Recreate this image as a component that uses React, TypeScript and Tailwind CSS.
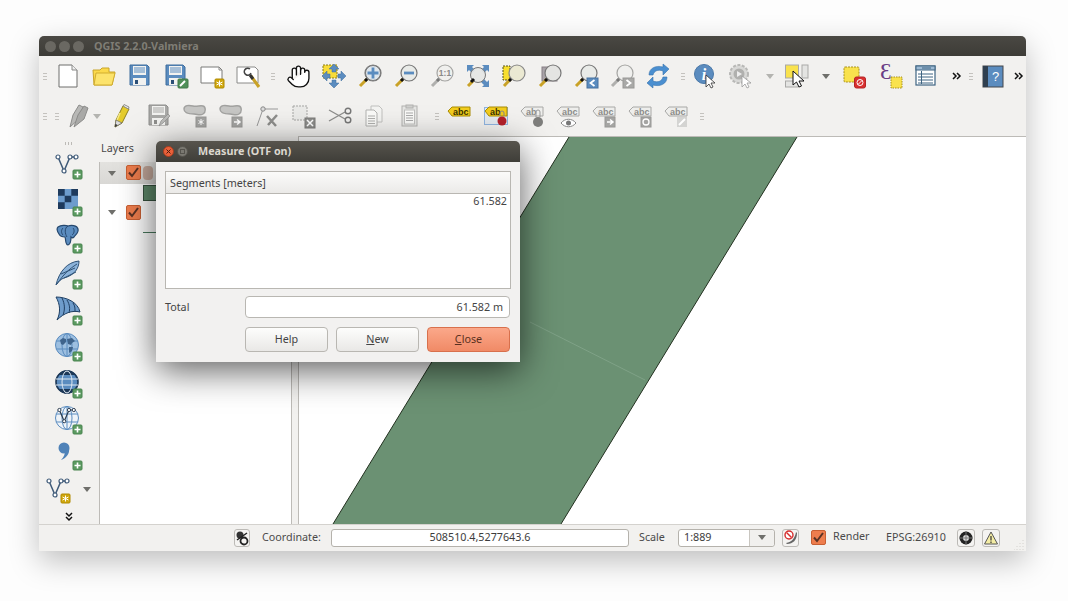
import React from 'react';
import { Hand } from 'lucide-react';

const Grip = ({ className = '' }: { className?: string }) => (
  <div className={`flex flex-col items-center gap-[2px] shrink-0 ${className}`}>
    <div className="w-[4px] h-[1px] bg-[#c4c2be]" />
    <div className="w-[4px] h-[1px] bg-[#c4c2be]" />
    <div className="w-[4px] h-[1px] bg-[#c4c2be]" />
  </div>
);

const Slot = ({ className, children }: { className: string; children?: React.ReactNode }) => (
  <div className={`flex items-center justify-center shrink-0 h-full ${className}`}>{children}</div>
);

const Svg = ({ size = 24, children }: { size?: number; children: React.ReactNode }) => (
  <svg width={size} height={size} viewBox={`0 0 ${size} ${size}`} className="overflow-visible">
    {children}
  </svg>
);

const Arrow = ({ dark }: { dark?: boolean }) => (
  <div className={`w-0 h-0 border-x-[4px] border-x-transparent border-t-[5px] ${dark ? 'border-t-[#6f6f6b]' : 'border-t-[#b4b4b0]'}`} />
);

const Chevrons = () => (
  <svg width="10" height="8" viewBox="0 0 10 8">
    <path d="M1 1l3 3-3 3M5 1l3 3-3 3" fill="none" stroke="#111" strokeWidth="1.5" />
  </svg>
);

const Floppy = ({ gray }: { gray?: boolean }) => {
  const c = gray ? '#a9a9a7' : '#5b8cbf';
  return (
    <>
      <path d="M2 1h17l2 2v18H2z" fill={c} stroke={gray ? '#8e8e8c' : '#3f6c9c'} />
      <rect x="5" y="2" width="13" height="9" fill="#f2f2f0" />
      <path d="M6 4h11M6 6h11M6 8h11" stroke={c} />
      <rect x="5" y="14" width="13" height="7" fill="#f2f2f0" />
      <rect x="7" y="16" width="3" height="4" fill={gray ? '#8e8e8c' : '#2c4f77'} />
    </>
  );
};

const YellowBadge = ({ x, y }: { x: number; y: number }) => (
  <g>
    <rect x={x} y={y} width="9" height="9" rx="1" fill="#d0a70c" stroke="#b08a00" />
    <path d={`M${x + 4.5} ${y + 1.5}v6M${x + 1.5} ${y + 3}l6 3M${x + 1.5} ${y + 6}l6-3`} stroke="#fff" strokeWidth="1" />
  </g>
);

const PlusBadge = ({ x = 18, y = 19 }: { x?: number; y?: number }) => (
  <g>
    <rect x={x} y={y} width="9" height="9" rx="1" fill="#5b9a60" stroke="#4b8550" />
    <path d={`M${x + 4.5} ${y + 1.5}v6M${x + 1.5} ${y + 4.5}h6`} stroke="#fff" strokeWidth="1.6" />
  </g>
);

// magnifier: glass in the upper right, handle in the lower left
const Lens = ({ gray, children }: { gray?: boolean; children?: React.ReactNode }) => (
  <Svg>
    <path d="M9.5 14.5L2 22" stroke={gray ? '#b0b0ae' : '#c9a227'} strokeWidth="3" />
    <path d="M10 14l-3 3" stroke={gray ? '#777' : '#111'} strokeWidth="3" />
    <circle cx="15" cy="9" r="8" fill={gray ? '#f0f0ee' : '#e9ebe8'} stroke={gray ? '#a5a5a3' : '#777'} strokeWidth="1.2" />
    {children}
  </Svg>
);

const BlueArrows = ({ op = 1 }: { op?: number }) => (
  <g fill="#5b8cbf" stroke="#3f6c9c" strokeWidth="0.5" opacity={op}>
    <path d="M12 0l5 5h-3v3h-4V5H7z" />
    <path d="M12 24l5-5h-3v-3h-4v3H7z" />
    <path d="M0 12l5-5v3h3v4H5v3z" />
    <path d="M24 12l-5-5v3h-3v4h3v3z" />
  </g>
);

const Blob = ({ badge }: { badge: React.ReactNode }) => (
  <Svg>
    <path d="M1 5c0-4 5-4 9-3s7-1 10 0 3 6 0 8-6 0-9 0-10 0-10-5z" fill="#c6c6c4" stroke="#a2a2a0" strokeWidth="1.400" />
    {badge}
  </Svg>
);

const Tag = ({ text, gray, children }: { text: string; gray?: boolean; children?: React.ReactNode }) => (
  <Svg>
    <path d="M1 7l4-4h18v9H5z" fill={gray ? '#eeeeec' : '#f3cd1d'} stroke={gray ? '#a8a8a6' : '#a98c05'} />
    <text x="6" y="10.5" fontSize="9" fontWeight="700" fontFamily="'Liberation Sans', sans-serif" fill={gray ? '#8c8c8a' : '#3a3200'}>{text}</text>
    {children}
  </Svg>
);

const GrayBox = ({ children }: { children: React.ReactNode }) => (
  <g>
    <rect x="13" y="13" width="10" height="10" fill="#a5a5a3" stroke="#989896" />
    {children}
  </g>
);

const Pages = ({ clip }: { clip?: boolean }) => (
  <Svg>
    {clip ? (
      <>
        <rect x="4" y="2" width="15" height="20" fill="#e6e6e4" stroke="#b2b2b0" />
        <rect x="8" y="1" width="7" height="3" fill="#d0d0ce" stroke="#b2b2b0" />
        <rect x="6.5" y="6" width="10" height="14" fill="#fafaf8" stroke="#c0c0be" />
        <path d="M8 9h7M8 11.500h7M8 14h7M8 16.500h7" stroke="#aaa" />
      </>
    ) : (
      <>
        <path d="M9 2h8l3 3v13H9z" fill="#f4f4f2" stroke="#c0c0be" />
        <path d="M4 6h8l3 3v13H4z" fill="#fafaf8" stroke="#b2b2b0" />
        <path d="M6 12h7M6 14.500h7M6 17h7M6 19.500h7" stroke="#b0b0ae" />
      </>
    )}
  </Svg>
);

const TopToolbar = () => (
  <div className="flex items-center h-[40px] shrink-0">
    <Slot className="w-[11px]"><Grip /></Slot>
    <Slot className="w-[36px]">
      <Svg>
        <path d="M3 1h13l5 5v17H3z" fill="#fff" stroke="#6e6e6c" />
        <path d="M16 1v5h5" fill="#eee" stroke="#8a8a88" />
      </Svg>
    </Slot>
    <Slot className="w-[36px]">
      <Svg>
        <path d="M1 6h7l2-2h7v4h6l-3 13H2z" fill="#fbd94b" stroke="#c9a52a" />
        <path d="M4 9h19l-3 12H2z" fill="#fce36c" stroke="#d1ad2f" />
      </Svg>
    </Slot>
    <Slot className="w-[36px]"><Svg><Floppy /></Svg></Slot>
    <Slot className="w-[36px]">
      <Svg>
        <Floppy />
        <rect x="14" y="15" width="10" height="9" rx="1" fill="#4f8f58" stroke="#427a4a" />
        <path d="M16 22l5-5" stroke="#fff" strokeWidth="2" />
      </Svg>
    </Slot>
    <Slot className="w-[36px]">
      <Svg>
        <path d="M1 3h18l3 3v13H1z" fill="#fff" stroke="#7a7a78" />
        <path d="M19 3v3h3" fill="none" stroke="#8a8a88" />
        <YellowBadge x={15} y={15} />
      </Svg>
    </Slot>
    <Slot className="w-[36px]">
      <Svg>
        <path d="M1 3h18l3 3v13H1z" fill="#fff" stroke="#8a8a88" />
        <path d="M14 5a3.500 3.500 0 1 0 1 4" fill="none" stroke="#444" strokeWidth="1.500" />
        <path d="M15 12l8 11" stroke="#c9a227" strokeWidth="3" />
        <path d="M14 11l3 4" stroke="#333" strokeWidth="3" />
      </Svg>
    </Slot>
    <Slot className="w-[14px]"><Grip /></Slot>
    <Slot className="w-[36px]"><Hand size={25} strokeWidth={1.3} color="#111" fill="#fff" /></Slot>
    <Slot className="w-[36px]">
      <Svg>
        <rect x="1" y="1" width="14" height="13" fill="#f8dc3a" stroke="#8a7b10" strokeDasharray="2 1" />
        <BlueArrows />
      </Svg>
    </Slot>
    <Slot className="w-[36px]">
      <Lens>
        <circle cx="15" cy="9" r="7.500" fill="#dfe6ec" stroke="#777" />
        <path d="M15 3.500v11M9.500 9h11" stroke="#5b8cbf" strokeWidth="2.800" />
      </Lens>
    </Slot>
    <Slot className="w-[36px]">
      <Lens><path d="M10 9h10" stroke="#5b8cbf" strokeWidth="2.800" /></Lens>
    </Slot>
    <Slot className="w-[36px]">
      <Lens gray>
        <text x="15" y="12" textAnchor="middle" fontSize="8.500" fontWeight="700" fontFamily="'Liberation Sans', sans-serif" fill="#8a8a88">1:1</text>
      </Lens>
    </Slot>
    <Slot className="w-[36px]">
      <Svg>
        <g fill="#5b8cbf">
          <path d="M1 1h7l-2 2 3 3-3 3-3-3-2 2z" />
          <path d="M23 1h-7l2 2-3 3 3 3 3-3 2 2z" />
          <path d="M23 23h-7l2-2-3-3 3-3 3 3 2-2z" />
        </g>
        <path d="M7 17L2 22" stroke="#c9a227" strokeWidth="3" />
        <circle cx="12" cy="11" r="7.500" fill="#e4e6e3" fillOpacity="0.900" stroke="#777" />
        <path d="M8 15l-3 3" stroke="#111" strokeWidth="3" />
      </Svg>
    </Slot>
    <Slot className="w-[36px]">
      <Svg>
        <rect x="1" y="2" width="7" height="14" fill="#f7de2e" stroke="#55501a" strokeDasharray="2 1" />
        <path d="M9 14.500L2 22" stroke="#c9a227" strokeWidth="3" />
        <path d="M10 14l-3 3" stroke="#111" strokeWidth="3" />
        <circle cx="15" cy="9" r="8" fill="#ebe9d2" stroke="#888" strokeWidth="1.200" />
      </Svg>
    </Slot>
    <Slot className="w-[36px]">
      <Svg>
        <rect x="4" y="3" width="15" height="14" fill="#a9a3a8" stroke="#857f84" />
        <path d="M9.500 14.500L2 22" stroke="#c9a227" strokeWidth="3" />
        <path d="M10 14l-3 3" stroke="#111" strokeWidth="3" />
        <circle cx="15" cy="9" r="8" fill="#e4e4e2" stroke="#777" strokeWidth="1.200" />
      </Svg>
    </Slot>
    <Slot className="w-[36px]">
      <Lens>
        <rect x="13" y="14" width="11" height="10" fill="#5b8cbf" stroke="#47719e" />
        <path d="M20.500 16l-4 3 4 3" fill="none" stroke="#fff" strokeWidth="1.800" />
      </Lens>
    </Slot>
    <Slot className="w-[36px]">
      <Lens gray>
        <rect x="13" y="14" width="11" height="10" fill="#a9a9a7" stroke="#989896" />
        <path d="M16.500 16l4 3-4 3" fill="none" stroke="#fff" strokeWidth="1.800" />
      </Lens>
    </Slot>
    <Slot className="w-[36px]">
      <Svg>
        <path d="M3 11C3 4 10 1 17 3V0l6 5-6 6V7C12 5 8 7 7 11z" fill="#4b8fd0" stroke="#3772ab" strokeWidth="0.600" />
        <path d="M21 13c0 7-7 10-14 8v3l-6-5 6-6v4c5 2 9 0 10-4z" fill="#4b8fd0" stroke="#3772ab" strokeWidth="0.600" />
      </Svg>
    </Slot>
    <Slot className="w-[14px]"><Grip /></Slot>
    <Slot className="w-[32px]">
      <Svg>
        <circle cx="10" cy="10" r="9.500" fill="#5b8cbf" stroke="#4a78a8" />
        <text x="10" y="16" textAnchor="middle" fontSize="16" fontWeight="700" fontStyle="italic" fontFamily="'Liberation Serif', serif" fill="#fff">i</text>
        <path d="M12 11v12l3-3 2 4 2-1-2-4h4z" fill="#fff" stroke="#333" strokeWidth="0.800" />
      </Svg>
    </Slot>
    <Slot className="w-[38px]">
      <Svg>
        <circle cx="10" cy="10" r="9" fill="#d8d8d6" stroke="#b8b8b6" strokeWidth="2" strokeDasharray="3 1.500" />
        <circle cx="10" cy="10" r="5.500" fill="#b0b0ae" />
        <path d="M8 7v6l5-3z" fill="#eee" />
        <path d="M13 12v11l3-3 2 4 2-1-2-4h4z" fill="#fff" stroke="#999" strokeWidth="0.800" />
      </Svg>
    </Slot>
    <Slot className="w-[20px]"><Arrow /></Slot>
    <Slot className="w-[34px]">
      <Svg>
        <rect x="0.500" y="1" width="13" height="13" fill="#f9e24d" stroke="#a9a9a7" />
        <rect x="17" y="1" width="6" height="13" fill="#e4e4e2" stroke="#a9a9a7" />
        <rect x="0.500" y="17" width="13" height="6" fill="#e4e4e2" stroke="#a9a9a7" />
        <path d="M8 7v14l3.500-3 2.500 5 2.500-1-2.500-5h5z" fill="#fff" stroke="#111" />
      </Svg>
    </Slot>
    <Slot className="w-[24px]"><Arrow dark /></Slot>
    <Slot className="w-[34px]">
      <Svg>
        <rect x="1" y="3" width="15" height="15" rx="1" fill="#f9e24d" stroke="#a8901c" strokeDasharray="2 1" />
        <rect x="11.500" y="13" width="11" height="11" rx="2" fill="#d93030" stroke="#b52424" />
        <circle cx="17" cy="18.500" r="3" fill="none" stroke="#fff" />
        <path d="M15 20.500l4-4" stroke="#fff" />
      </Svg>
    </Slot>
    <Slot className="w-[36px]">
      <Svg>
        <text x="2" y="15" fontSize="23" fontFamily="'Liberation Serif', serif" fill="#6b3d86">Ɛ</text>
        <rect x="13" y="13" width="11" height="11" fill="#f9e24d" stroke="#a8901c" strokeDasharray="1.500 1" />
      </Svg>
    </Slot>
    <Slot className="w-[36px]">
      <Svg>
        <rect x="2" y="2" width="19" height="19" fill="#fff" stroke="#3f6482" strokeWidth="1.200" />
        <rect x="2" y="2" width="19" height="4" fill="#9dbad4" stroke="#3f6482" />
        <path d="M8 4h9M4 10h15M4 13h15M4 16h15M4 19h15" stroke="#3f6482" />
        <path d="M7.500 7v13" stroke="#3f6482" />
      </Svg>
    </Slot>
    <Slot className="w-[24px] ml-[1px]"><Chevrons /></Slot>
    <Slot className="w-[4px]"><Grip /></Slot>
    <Slot className="w-[40px]">
      <Svg>
        <rect x="2" y="2" width="20" height="21" fill="#5b8cbf" stroke="#44474a" />
        <rect x="2" y="2" width="5" height="21" fill="#2f3f4f" />
        <text x="14.500" y="17" textAnchor="middle" fontSize="13" fontFamily="'Liberation Sans', sans-serif" fill="#fff">?</text>
      </Svg>
    </Slot>
    <Slot className="w-[12px]"><Chevrons /></Slot>
  </div>
);

const BottomToolbar = () => (
  <div className="flex items-center h-[40px] shrink-0">
    <Slot className="w-[11px]"><Grip /></Slot>
    <Slot className="w-[13px]"><Grip /></Slot>
    <Slot className="w-[22px] ml-[7px]">
      <Svg>
        <path d="M1 23L4 11 10 1l4 2-3 11z" fill="#b8b8b6" stroke="#8c8c8a" />
        <path d="M5 23L9 11l6-9 4 2-4 11z" fill="#a9a9a7" stroke="#8c8c8a" />
      </Svg>
    </Slot>
    <Slot className="w-[10px]"><Arrow /></Slot>
    <Slot className="w-[42px]">
      <Svg>
        <path d="M4 23l1-7L12 2l6 3-7 14z" fill="#e4cb2c" stroke="#8c7f20" />
        <path d="M12 2l1-1.500 5 2.500-.5 2z" fill="#f4f4f2" stroke="#8c8c8a" />
        <path d="M9 9l-3 7" stroke="#f6e98a" strokeWidth="1.500" />
        <path d="M4 23l1-7 6 3z" fill="#ddd" stroke="#666" strokeWidth="0.700" />
        <path d="M4 23l.5-3 2 1z" fill="#222" />
      </Svg>
    </Slot>
    <Slot className="w-[30px]">
      <Svg>
        <Floppy gray />
        <path d="M12 22l2-5 7-7 2 2-7 7z" fill="#bcbcba" stroke="#8e8e8c" strokeWidth="0.700" />
      </Svg>
    </Slot>
    <Slot className="w-[42px]">
      <Blob badge={<GrayBox><path d="M18 15v6M15.500 16.500l5 3M15.500 19.500l5-3" stroke="#fff" /></GrayBox>} />
    </Slot>
    <Slot className="w-[30px]">
      <Blob badge={<GrayBox><path d="M15 18h5M18 15.500l3 2.500-3 2.500" fill="none" stroke="#fff" strokeWidth="1.500" /></GrayBox>} />
    </Slot>
    <Slot className="w-[44px]">
      <Svg>
        <path d="M1 22L7 5h15" fill="none" stroke="#999" />
        <circle cx="7" cy="5" r="2.200" fill="#ddd" stroke="#888" />
        <path d="M11 12l9 10M21 11l-9 10" stroke="#8e8e8c" strokeWidth="2.500" />
      </Svg>
    </Slot>
    <Slot className="w-[28px]">
      <Svg>
        <rect x="1" y="2" width="14" height="14" fill="#eaeae8" stroke="#a5a5a3" strokeDasharray="2 1" />
        <rect x="13" y="14" width="10" height="10" fill="#8e8e8c" stroke="#7a7a78" />
        <path d="M15 16l6 6M21 16l-6 6" stroke="#fff" strokeWidth="1.500" />
      </Svg>
    </Slot>
    <Slot className="w-[44px]">
      <Svg>
        <path d="M1 6l16 9M1 17l16-9" stroke="#8e8e8c" strokeWidth="1.400" />
        <circle cx="20" cy="7" r="2.800" fill="none" stroke="#777" strokeWidth="1.400" />
        <circle cx="20" cy="16" r="2.800" fill="none" stroke="#777" strokeWidth="1.400" />
      </Svg>
    </Slot>
    <Slot className="w-[24px]"><Pages /></Slot>
    <Slot className="w-[48px]"><Pages clip /></Slot>
    <Slot className="w-[6px]"><Grip /></Slot>
    <Slot className="w-[38px]"><Tag text="abc" /></Slot>
    <Slot className="w-[36px]">
      <div className="border border-[#8fb4e0] bg-[#e4eaf0] w-[24px] h-[18px] flex items-center justify-center overflow-visible">
        <Tag text="ab">
          <circle cx="18" cy="17" r="4.500" fill="#b3202a" />
          <path d="M16 12V9a2 2 0 0 1 4 0v3" fill="none" stroke="#888" />
        </Tag>
      </div>
    </Slot>
    <Slot className="w-[36px]">
      <Tag text="ab" gray>
        <circle cx="18" cy="18" r="5" fill="#7e7e7c" />
        <path d="M16 13V8a2 2 0 0 1 4 0v5" fill="none" stroke="#999" />
      </Tag>
    </Slot>
    <Slot className="w-[36px]">
      <Tag text="abc" gray>
        <path d="M5 19c4-5 11-5 15 0-4 5-11 5-15 0z" fill="#fff" stroke="#888" />
        <circle cx="12.500" cy="19" r="2.500" fill="#777" />
      </Tag>
    </Slot>
    <Slot className="w-[36px]">
      <Tag text="abc" gray>
        <GrayBox><path d="M15 18h5M18 15.500l3 2.500-3 2.500" fill="none" stroke="#fff" strokeWidth="1.500" /></GrayBox>
      </Tag>
    </Slot>
    <Slot className="w-[36px]">
      <Tag text="abc" gray>
        <GrayBox><circle cx="18" cy="18" r="3" fill="none" stroke="#fff" strokeWidth="1.300" /></GrayBox>
      </Tag>
    </Slot>
    <Slot className="w-[36px]">
      <Tag text="abc" gray>
        <rect x="13" y="13" width="10" height="10" fill="#d4d4d2" />
        <path d="M15 21l6-6" stroke="#fff" strokeWidth="2" />
      </Tag>
    </Slot>
    <Slot className="w-[16px]"><Grip /></Slot>
  </div>
);

const Vector = ({ dark = '#3f5a78', scale = 1 }: { dark?: string; scale?: number }) => (
  <g transform={`scale(${scale})`}>
    <path d="M3 5l6 14 6-14h6" fill="none" stroke={dark} strokeWidth="1.500" />
    <circle cx="3" cy="5" r="2" fill="#fff" stroke={dark} strokeWidth="1.200" />
    <circle cx="9" cy="19" r="2" fill="#fff" stroke={dark} strokeWidth="1.200" />
    <circle cx="15" cy="5" r="2" fill="#fff" stroke={dark} strokeWidth="1.200" />
    <circle cx="21" cy="5" r="2" fill="#fff" stroke={dark} strokeWidth="1.200" />
  </g>
);

const Globe = ({ children, fill = '#9dbfe0' }: { children?: React.ReactNode; fill?: string }) => (
  <>
    <circle cx="12" cy="12" r="11.500" fill={fill} stroke="#5b8cbf" />
    <ellipse cx="12" cy="12" rx="5" ry="11.500" fill="none" stroke="#5b8cbf" />
    <path d="M1 8h22M1 16h22M12 0v24" stroke="#5b8cbf" />
    {children}
  </>
);

const sideIcons: React.ReactNode[] = [
  <Svg size={28} key="vector"><g transform="translate(0 1)"><Vector /></g><PlusBadge /></Svg>,
  <Svg size={28} key="raster">
    <rect x="3" y="2" width="20" height="20" fill="#6d9ccd" />
    <path d="M3 2h6.700v6.700H3zM16.300 2H23v6.700h-6.700zM9.700 8.700h6.600v6.600H9.700zM3 15.300h6.700V22H3z" fill="#1e3a5c" />
    <PlusBadge y={20} />
  </Svg>,
  <Svg size={28} key="postgres">
    <path d="M3 3c3-2 8-2 10-1 3-1 9-1 10 3 1 4-3 6-4 8-1 1-2 1-3 0 0 3 0 7-3 8-3 0-2-6-3-8-2 0-5-1-6-3-2-3-3-5-1-7z" fill="#5b8cbf" stroke="#26486e" strokeWidth="1.200" />
    <path d="M13 2c-4 2-3 8-1 11M8 4c-2 2-2 5 0 7M18 4c2 2 1 6-1 7" fill="none" stroke="#26486e" />
    <PlusBadge y={20} />
  </Svg>,
  <Svg size={28} key="spatialite">
    <path d="M1 25C4 12 12 2 24 1c0 7-4 14-15 17-3 1-5 3-8 7z" fill="#8cb3da" stroke="#2f5276" />
    <path d="M2 24C8 15 14 9 22 4M9 18l12-6M6 14l14-6" stroke="#2f5276" fill="none" />
    <PlusBadge y={20} />
  </Svg>,
  <Svg size={28} key="wing">
    <path d="M1 1c10 0 22 5 24 15-8-2-16 1-23 8 4-8 3-16-1-23z" fill="#6e9ccb" stroke="#1f3f63" />
    <path d="M7 2c3 6 3 12 1 17M12 4c3 5 3 9 2 13M18 7c2 3 2 5 2 8" stroke="#1f3f63" fill="none" />
    <PlusBadge y={20} />
  </Svg>,
  <Svg size={28} key="wms">
    <g transform="translate(0 1)">
      <Globe>
        <path d="M5 7l3-2 3 1v3l-3 3-2-1zM12 6l5-1 3 3-3 2-1 2-3-1zM14 14h4l-1 4-3 2z" fill="#3f648c" />
      </Globe>
    </g>
    <PlusBadge y={20} />
  </Svg>,
  <Svg size={28} key="wcs">
    <g transform="translate(0 1)">
      <circle cx="12" cy="12" r="11" fill="#5b8cbf" stroke="#1d3857" strokeWidth="1.600" />
      <path d="M3 5a11 11 0 0 1 18 0zM3 19a11 11 0 0 0 18 0z" fill="#1d3857" />
      <ellipse cx="12" cy="12" rx="5" ry="11" fill="none" stroke="#dfe8f1" />
      <path d="M1 9h22M1 15h22" stroke="#dfe8f1" />
    </g>
    <PlusBadge y={20} />
  </Svg>,
  <Svg size={28} key="wfs">
    <g transform="translate(0 1)"><Globe fill="#eef3f8" /><g transform="translate(2 0)"><Vector dark="#2a3a4c" scale={0.8} /></g></g>
    <PlusBadge y={20} />
  </Svg>,
  <Svg size={28} key="text">
    <circle cx="9" cy="7" r="5.500" fill="#4f82b8" />
    <path d="M14 7c1 6-3 10-8 12 3-3 4-6 4-9z" fill="#4f82b8" />
    <PlusBadge y={20} />
  </Svg>,
];

const SidePanel = () => (
  <div className="w-[60px] shrink-0 flex flex-col items-center">
    <div className="flex gap-[2px] mt-[6px] mb-[6px] ml-[-2px] h-[3px]">
      <div className="w-[1px] h-[3px] bg-[#bcbab6]" />
      <div className="w-[1px] h-[3px] bg-[#bcbab6]" />
      <div className="w-[1px] h-[3px] bg-[#bcbab6]" />
    </div>
    <div className="flex flex-col items-center gap-[8.3px] ml-[-1px]">
      {sideIcons}
    </div>
    <div className="flex items-center mt-[6px] self-start ml-[7px]">
      <Svg size={28}>
        <g transform="translate(0 1)"><Vector /></g>
        <YellowBadge x={15} y={19} />
      </Svg>
      <div className="ml-[9px]"><Arrow dark /></div>
    </div>
    <div className="mt-[10px] rotate-90"><Chevrons /></div>
  </div>
);

const Check = () => (
  <div className="w-[15px] h-[15px] rounded-[2px] bg-[#ee7d4d] border border-[#c75f33] flex items-center justify-center shrink-0">
    <svg width="13" height="13" viewBox="0 0 13 13">
      <path d="M2 6.500l3 3.500 6-8" fill="none" stroke="#5a3325" strokeWidth="2" />
    </svg>
  </div>
);

const LayersPanel = () => (
  <div className="w-[193px] shrink-0 flex flex-col mr-[6px]">
    <div className="h-[26px] shrink-0 flex items-center pl-[2px] pb-[2px] text-[#4a4a4a]">Layers</div>
    <div className="flex-1 bg-white border-l border-r border-[#bdbbb7]">
      <div className="h-[22px] flex items-center bg-gradient-to-b from-[#e3e2df] to-[#d9d8d5] pl-[8px]">
        <Arrow dark />
        <div className="ml-[10px] mt-[-1px]"><Check /></div>
        <div className="ml-[2px] w-[10px] h-[14px] rounded-[4px] bg-[#c3a89b]" />
      </div>
      <div className="h-[17px] pl-[43px] flex items-center">
        <div className="w-[30px] h-[16px] bg-[#5f8a6b] border border-[#37523f]" />
      </div>
      <div className="h-[23px] flex items-center pl-[8px]">
        <Arrow dark />
        <div className="ml-[10px]"><Check /></div>
      </div>
      <div className="h-[1px] w-[40px] ml-[43px] mt-[8px] bg-[#4a7a5e]" />
    </div>
  </div>
);

const MapCanvas = () => (
  <div className="flex-1 bg-white border-l border-t border-[#bdbbb7] overflow-hidden">
    <svg viewBox="0 0 727 387" className="block w-full h-full">
      <polygon points="270,0 498,0 262,387 34,387" fill="#6b9173" />
      <path d="M270 0L34 387M498 0L262 387" stroke="#22301f" strokeWidth="1" />
      <path d="M231 185L346 243" stroke="#7fa287" strokeWidth="1" />
    </svg>
  </div>
);

const StatusBar = () => (
  <div className="h-[27px] shrink-0 flex items-center pl-[195px] pb-[1px] border-t border-[#d4d2ce] text-[#4a4a4a] relative">
    <div className="w-[16px] h-[18px] rounded-[3px] border border-[#bcbab6] bg-[#f4f3f1] flex items-center justify-center shrink-0">
      <svg width="14" height="16" viewBox="0 0 14 16">
        <circle cx="5" cy="5" r="3.500" fill="#333" />
        <circle cx="9" cy="11" r="3.500" fill="none" stroke="#222" strokeWidth="1.800" />
        <path d="M2 10l10-7" stroke="#222" strokeWidth="1.500" />
      </svg>
    </div>
    <div className="w-[69px] ml-[12px] shrink-0">Coordinate:</div>
    <div className="w-[298px] h-[18px] shrink-0 rounded-[3px] border border-[#b5b2ac] bg-white flex items-center justify-center text-[#3c3c3c]">508510.4,5277643.6</div>
    <div className="w-[39px] ml-[10px] shrink-0">Scale</div>
    <div className="w-[97px] h-[18px] shrink-0 rounded-[3px] border border-[#b5b2ac] bg-white flex items-center text-[#3c3c3c]">
      <div className="flex-1 pl-[5px]">1:889</div>
      <div className="w-[25px] h-full border-l border-[#c9c6c0] bg-[#f1f0ee] rounded-r-[3px] flex items-center justify-center"><Arrow dark /></div>
    </div>
    <div className="w-[17px] h-[18px] ml-[7px] shrink-0 rounded-[3px] border border-[#bcbab6] bg-[#f4f3f1] flex items-center justify-center">
      <svg width="15" height="15" viewBox="0 0 15 15">
        <path d="M3 13C9 12 12 8 13 2l1 1C14 10 10 14 4 14z" fill="#666" />
        <circle cx="6" cy="5" r="4" fill="#fff" stroke="#d62c2c" strokeWidth="1.400" />
        <path d="M3.500 2.500l5 5" stroke="#d62c2c" strokeWidth="1.400" />
      </svg>
    </div>
    <div className="ml-[12px]"><Check /></div>
    <div className="w-[53px] ml-[7px] shrink-0 mt-[-2px]">Render</div>
    <div className="w-[71px] shrink-0">EPSG:26910</div>
    <div className="w-[18px] h-[18px] shrink-0 rounded-[3px] border border-[#bcbab6] bg-[#f4f3f1] flex items-center justify-center">
      <svg width="14" height="14" viewBox="0 0 14 14">
        <circle cx="7" cy="7" r="6.500" fill="#222" />
        <circle cx="7" cy="7" r="3" fill="#ddd" />
        <path d="M7 0v14M0 7h14" stroke="#777" />
      </svg>
    </div>
    <div className="w-[18px] h-[18px] ml-[7px] shrink-0 rounded-[3px] border border-[#bcbab6] bg-[#f4f3f1] flex items-center justify-center">
      <svg width="14" height="14" viewBox="0 0 14 14">
        <path d="M7 1l6.500 12H.500z" fill="#f4eda4" stroke="#555" />
        <path d="M7 5v4.500M7 10.500v1.500" stroke="#333" strokeWidth="1.200" />
      </svg>
    </div>
    <div className="absolute right-[1px] bottom-[1px]">
      <svg width="11" height="11" viewBox="0 0 11 11">
        <path d="M9 1v1M9 4v1M6 4v1M9 7v1M6 7v1M3 7v1M9 10v1M6 10v1M3 10v1M0 10v1" stroke="#d4d2ce" />
      </svg>
    </div>
  </div>
);

const MeasureDialog = () => (
  <div className="absolute left-[117px] top-[105px] w-[364px] h-[221px] rounded-t-[5px] bg-[#f2f1f0] shadow-[0_8px_36px_rgba(0,0,0,0.65)] flex flex-col text-[#444]">
    <div className="h-[21px] shrink-0 rounded-t-[5px] bg-gradient-to-b from-[#57544d] to-[#3f3e39] flex items-center pl-[7px]">
      <div className="w-[11px] h-[11px] rounded-full bg-[#e9603a] border border-[#a53d20] flex items-center justify-center">
        <svg width="5" height="5" viewBox="0 0 5 5"><path d="M.5 .5l4 4M4.500 .5l-4 4" stroke="#4a1d10" /></svg>
      </div>
      <div className="w-[11px] h-[11px] ml-[3px] rounded-full bg-[#7a7871] border border-[#55534d] flex items-center justify-center">
        <div className="w-[5px] h-[5px] border border-[#55534d]" />
      </div>
      <div className="ml-[10px] text-[#dcd8cf] font-bold">Measure (OTF on)</div>
    </div>
    <div className="flex-1 px-[9px] pt-[9px]">
      <div className="h-[118px] border border-[#b9b7b2] bg-white flex flex-col">
        <div className="h-[22px] shrink-0 pl-[4px] pt-[1px] flex items-center border-b border-[#b9b7b2] bg-gradient-to-b from-[#fbfbfa] to-[#ebeae8]">Segments [meters]</div>
        <div className="text-right pr-[3px] mt-[-1px]">61.582</div>
      </div>
      <div className="flex items-center mt-[7px] h-[22px]">
        <div className="w-[80px] shrink-0">Total</div>
        <div className="flex-1 h-full rounded-[4px] border border-[#b9b7b2] bg-white flex items-center justify-end pr-[6px] mr-[1px]">61.582 m</div>
      </div>
      <div className="flex justify-end gap-[8px] mt-[9px] mr-[1px]">
        <button className="w-[83px] h-[25px] rounded-[4px] border border-[#b9b7b2] bg-gradient-to-b from-[#fdfdfc] to-[#e9e8e6] text-[#444]">Help</button>
        <button className="w-[83px] h-[25px] rounded-[4px] border border-[#b9b7b2] bg-gradient-to-b from-[#fdfdfc] to-[#e9e8e6] text-[#444]"><span className="underline">N</span>ew</button>
        <button className="w-[83px] h-[25px] rounded-[4px] border border-[#d8704c] bg-gradient-to-b from-[#fba88a] to-[#f08a66] text-[#5a3020]"><span className="underline">C</span>lose</button>
      </div>
    </div>
  </div>
);

export default function App() {
  return (
    <div className="w-[1068px] h-[601px] bg-[#fdfdfd] pt-[36px] pl-[39px] overflow-hidden font-['Noto_Sans',sans-serif] text-[10.75px]">
      <div className="relative w-[987px] h-[515px] rounded-t-[5px] bg-[#f2f1ef] flex flex-col shadow-[0_10px_30px_rgba(0,0,0,0.25)]">
        <div className="h-[20px] shrink-0 rounded-t-[5px] bg-gradient-to-b from-[#4a4843] to-[#3d3c37] flex items-center pl-[6px]">
          <div className="flex gap-[3px]">
            <div className="w-[11px] h-[11px] rounded-full bg-[#6a6862]" />
            <div className="w-[11px] h-[11px] rounded-full bg-[#6a6862]" />
            <div className="w-[11px] h-[11px] rounded-full bg-[#6a6862]" />
          </div>
          <div className="ml-[10px] text-[#7f7d75] font-bold">QGIS 2.2.0-Valmiera</div>
        </div>
        <TopToolbar />
        <BottomToolbar />
        <div className="flex-1 flex min-h-0">
          <SidePanel />
          <LayersPanel />
          <MapCanvas />
        </div>
        <StatusBar />
        <MeasureDialog />
      </div>
    </div>
  );
}
